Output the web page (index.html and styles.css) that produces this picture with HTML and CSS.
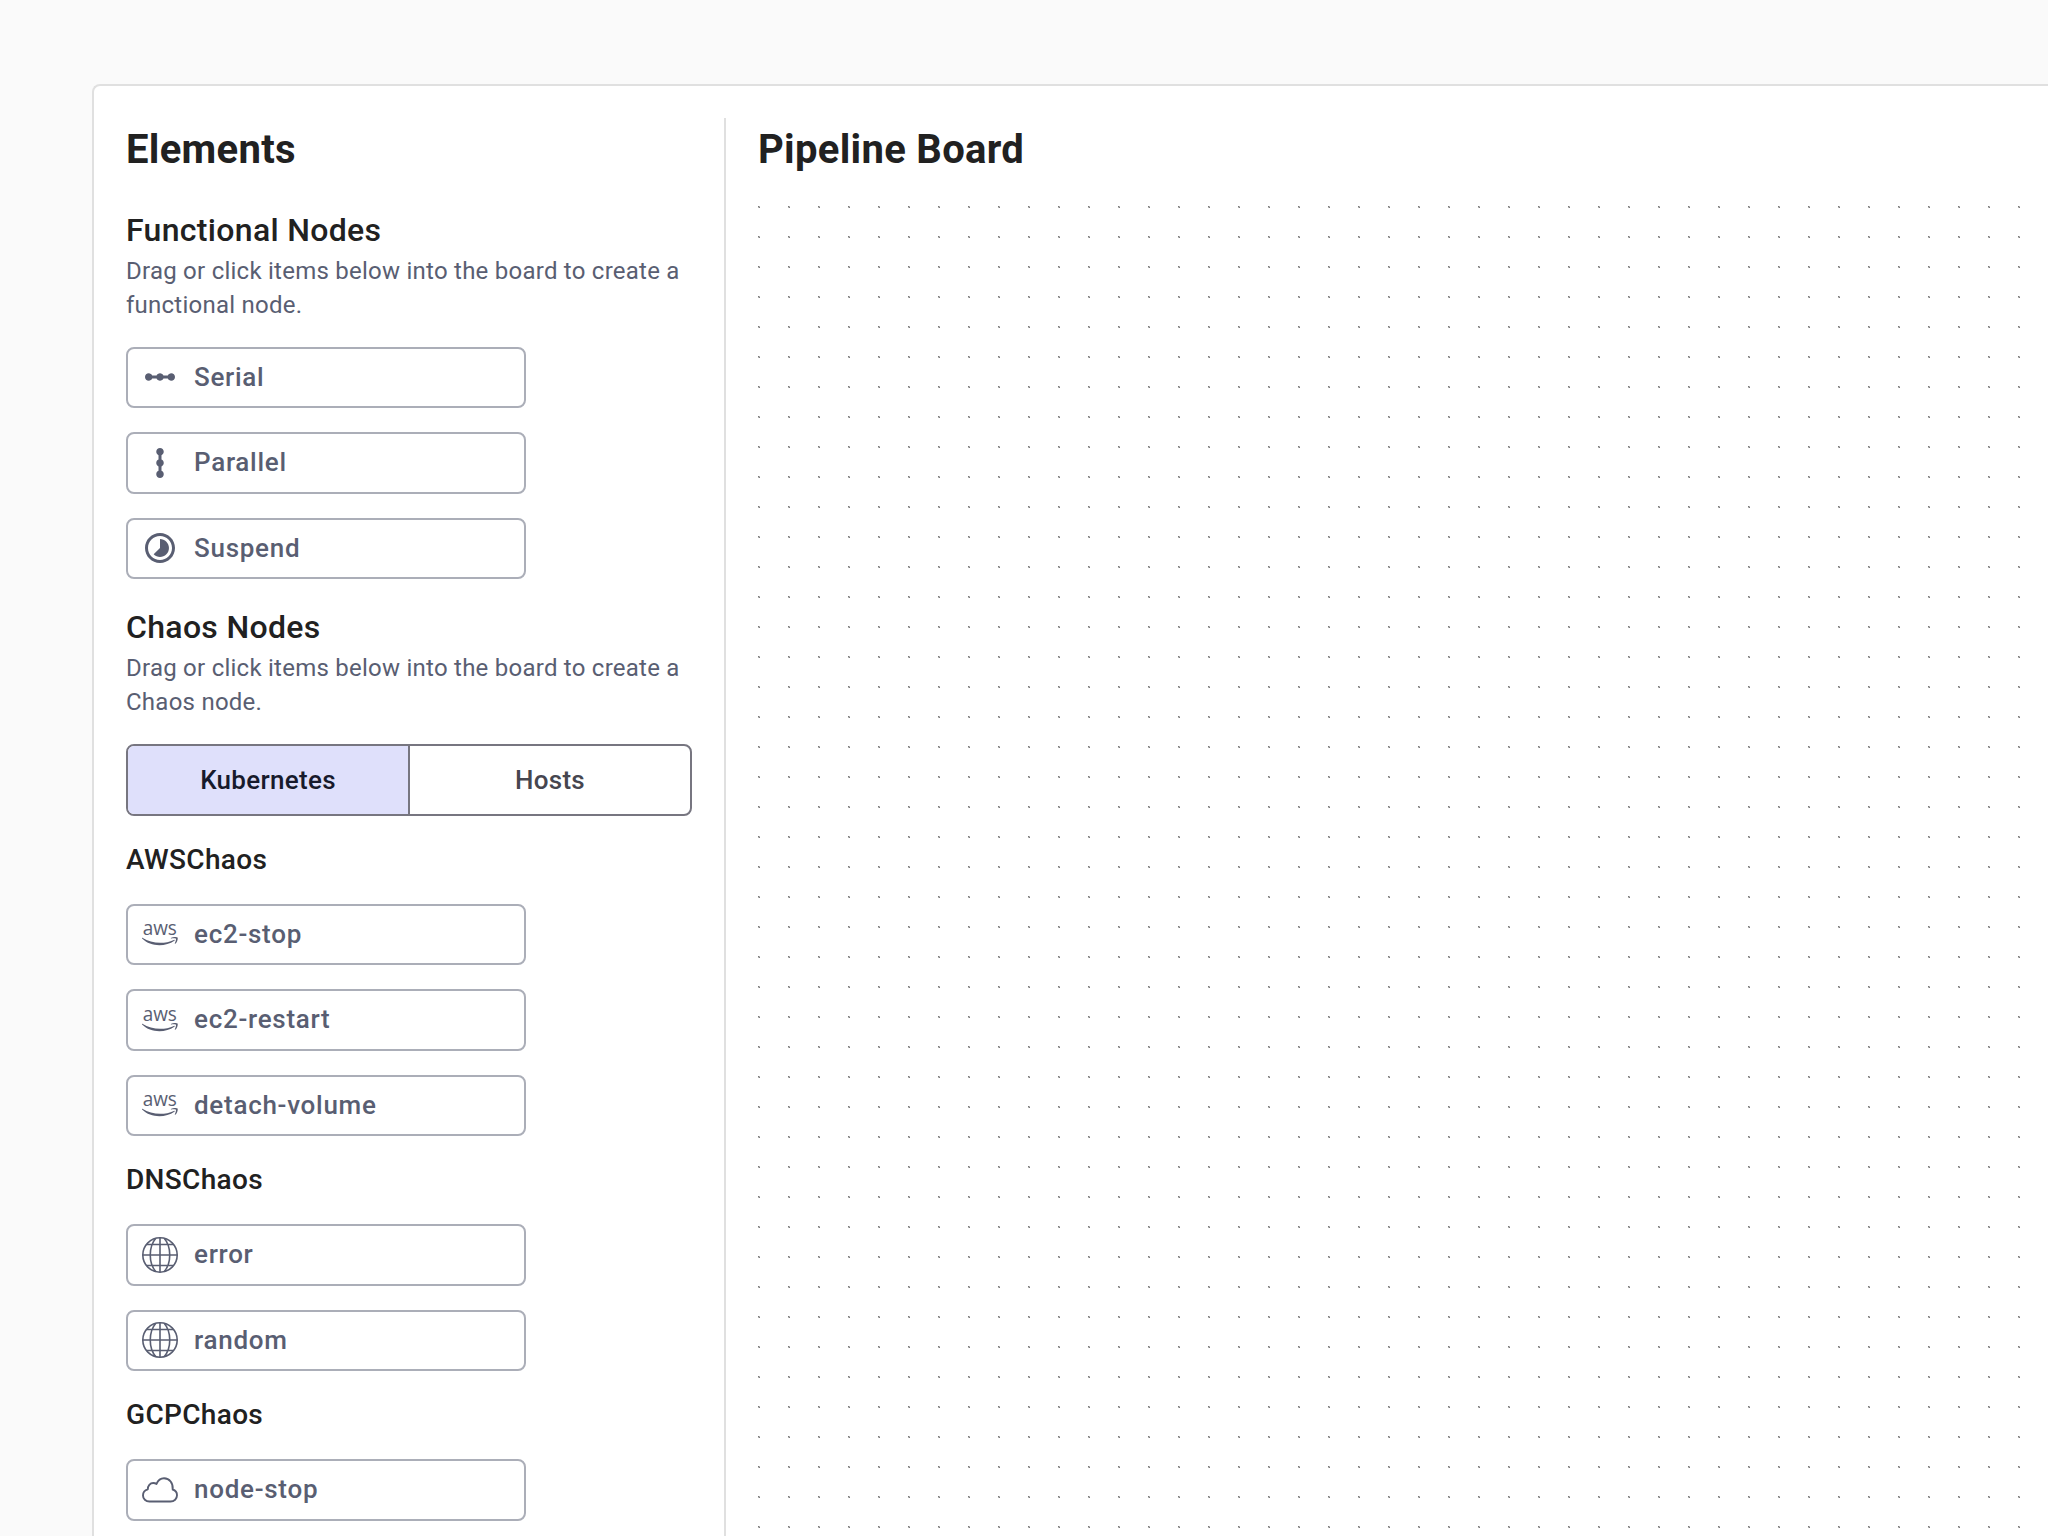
FILE: index.html
```
<!DOCTYPE html>
<html lang="en">
<head>
<meta charset="utf-8">
<title>Workflow editor</title>
<link rel="stylesheet" href="styles.css">
</head>
<body>
<svg class="sprite" aria-hidden="true">
  <symbol id="serial" viewBox="0 0 24 24"><path d="M19.500 9.500c-1.030 0-1.900.62-2.290 1.500h-2.920C13.900 10.120 13.030 9.500 12 9.500s-1.900.62-2.290 1.500H6.790c-.39-.88-1.260-1.500-2.290-1.500C3.120 9.500 2 10.620 2 12s1.120 2.500 2.500 2.500c1.030 0 1.900-.62 2.290-1.500h2.920c.39.88 1.260 1.500 2.290 1.500s1.900-.62 2.290-1.500h2.920c.39.88 1.260 1.500 2.290 1.500 1.380 0 2.500-1.120 2.500-2.500s-1.120-2.500-2.500-2.500z"/></symbol>
  <symbol id="suspend" viewBox="0 0 24 24"><path d="M16.240 7.760C15.070 6.590 13.540 6 12 6v6l-4.240 4.240c2.340 2.340 6.140 2.340 8.490 0 2.340-2.340 2.340-6.140-.01-8.480zM12 2C6.480 2 2 6.480 2 12s4.480 10 10 10 10-4.480 10-10S17.520 2 12 2zm0 18c-4.420 0-8-3.580-8-8s3.580-8 8-8 8 3.580 8 8-3.580 8-8 8z"/></symbol>
  <symbol id="aws" viewBox="0 0 36 36">
    <text x=".7" y="18.900" textLength="34.200" lengthAdjust="spacingAndGlyphs" class="aws-word">aws</text>
    <g transform="translate(0 2.300)">
      <path d="M.4 19.500C9.500 25.500 22.500 26.100 31.800 21.600c.9-.4 1.300.4.600.9C23.500 28.800 8.500 28.900.1 20.300c-.4-.5-.2-1 .3-.8z"/>
      <path d="M29 19.600c2.200-1.300 5.800-1.100 6.500-.5.7.8-.1 4.600-2.200 6.300-.4.300-.7.100-.5-.3.700-1.700 1.500-4 1.100-4.600-.4-.6-3.200-.5-4.600-.3-.5.100-.6-.3-.3-.6z"/>
    </g>
  </symbol>
  <symbol id="globe" viewBox="0 0 36 36"><g fill="none" stroke="currentColor" stroke-width="1.600"><circle cx="18" cy="18" r="17.200"/><path d="M13.800 1.300C6.400 10 6.400 26 13.800 34.700M22.200 1.300C29.600 10 29.600 26 22.200 34.700M18 .8v34.400M.8 18h34.400M4.500 7.500h27M4.500 28.500h27"/></g></symbol>
  <symbol id="cloud" viewBox="0 0 36 36"><path fill="none" stroke="currentColor" stroke-width="1.900" stroke-linejoin="round" d="M7.500 29.500C3.700 29.500 1 26.800 1 23.400c0-3 2-5.300 4.800-6C5.700 13.700 8.100 11 11.300 11c1.200 0 2.300.3 3.200.9C16 8.500 18.700 6.300 22 6.300c5.500 0 9.300 4.700 8.700 11.200 2.600.8 4.300 3.100 4.300 5.700 0 3.600-2.800 6.300-6.500 6.300z"/></symbol>
</svg>
<main class="card">
  <aside class="elements">
    <h1 class="title">Elements</h1>
    <section class="group">
      <h2 class="group-title">Functional Nodes</h2>
      <p class="hint">Drag or click items below into the board to create a functional node.</p>
      <div class="items">
        <button class="item"><svg class="icon"><use href="#serial"/></svg>Serial</button>
        <button class="item"><svg class="icon upright"><use href="#serial"/></svg>Parallel</button>
        <button class="item"><svg class="icon"><use href="#suspend"/></svg>Suspend</button>
      </div>
    </section>
    <section class="group">
      <h2 class="group-title">Chaos Nodes</h2>
      <p class="hint">Drag or click items below into the board to create a Chaos node.</p>
      <div class="toggle">
        <button class="option selected">Kubernetes</button>
        <button class="option">Hosts</button>
      </div>
      <h3 class="kind">AWSChaos</h3>
      <div class="items">
        <button class="item"><svg class="icon"><use href="#aws"/></svg>ec2-stop</button>
        <button class="item"><svg class="icon"><use href="#aws"/></svg>ec2-restart</button>
        <button class="item"><svg class="icon"><use href="#aws"/></svg>detach-volume</button>
      </div>
      <h3 class="kind">DNSChaos</h3>
      <div class="items">
        <button class="item"><svg class="icon"><use href="#globe"/></svg>error</button>
        <button class="item"><svg class="icon"><use href="#globe"/></svg>random</button>
      </div>
      <h3 class="kind">GCPChaos</h3>
      <div class="items">
        <button class="item"><svg class="icon"><use href="#cloud"/></svg>node-stop</button>
      </div>
    </section>
  </aside>
  <section class="board">
    <h1 class="title">Pipeline Board</h1>
    <svg class="canvas" aria-hidden="true">
      <defs>
        <pattern id="dots" width="30" height="30" patternUnits="userSpaceOnUse">
          <path fill="#b4b4b4" d="M0 0h2v2H0z"/>
          <path fill="#7c7c7c" d="M0 0h1v1H0zM1 1h1v1H1z"/>
        </pattern>
      </defs>
      <rect width="100%" height="100%" fill="url(#dots)"/>
    </svg>
  </section>
</main>
</body>
</html>
```
FILE: styles.css
```
* { box-sizing: border-box; }
body {
  margin: 0;
  height: 1536px;
  overflow: hidden;
  padding: 84px 0 0 92px;
  background: #fafafa;
  color: #212121;
  font-family: Roboto, sans-serif;
}
.sprite { display: none; }
h1, h2, h3, p { margin: 0; }
.card {
  display: flex;
  height: 100%;
  padding: 32px 0 0 32px;
  background: #fff;
  border: 2px solid #e0e0e0;
  border-width: 2px 0 0 2px;
  border-radius: 8px 0 0 0;
}
.elements {
  flex: 0 0 600px;
  padding-right: 32px;
  border-right: 2px solid #e0e0e0;
}
.title {
  font-size: 40px;
  line-height: 64px;
  font-weight: 700;
  letter-spacing: 0.3px;
}
.group-title {
  font-size: 32px;
  line-height: 48px;
  font-weight: 500;
  letter-spacing: 0.320px;
}
.group { padding-top: 24px; }
.hint {
  color: #595e72;
  font-size: 24px;
  line-height: 34.300px;
  letter-spacing: 0.245px;
}
.items {
  display: flex;
  flex-direction: column;
  gap: 24px;
}
.hint + .items, .toggle { margin-top: 24px; }
.item {
  display: flex;
  align-items: center;
  width: 400px;
  height: 61.500px;
  padding: 0 14px;
  border: 2px solid #abaeb8;
  border-radius: 8px;
  background: transparent;
  color: #595e72;
  font: 500 26px/45.500px Roboto, sans-serif;
  letter-spacing: 0.720px;
}
.icon {
  width: 36px;
  height: 36px;
  margin-right: 16px;
  fill: currentColor;
}
.upright { transform: rotate(90deg); }
.aws-word { font: 500 20px "Open Sans", sans-serif; letter-spacing: 0; }
.toggle {
  display: flex;
  height: 72px;
  border: 2px solid #777680;
  border-radius: 8px;
  overflow: hidden;
}
.option {
  flex: 1;
  padding: 2px 0 0;
  border: 0;
  background: transparent;
  color: #46464f;
  font: 500 26px/45.500px Roboto, sans-serif;
  letter-spacing: 0.3px;
}
.option.selected {
  background: #dfe0fb;
  color: #171a2c;
  border-right: 2px solid #777680;
}
.kind {
  padding: 24px 0;
  font-size: 28px;
  line-height: 40px;
  font-weight: 500;
  letter-spacing: 0.330px;
}
.board {
  flex: 1;
  display: flex;
  flex-direction: column;
  gap: 24px;
  padding-left: 32px;
}
.canvas {
  display: block;
  flex: 1;
  width: 100%;
}
```
